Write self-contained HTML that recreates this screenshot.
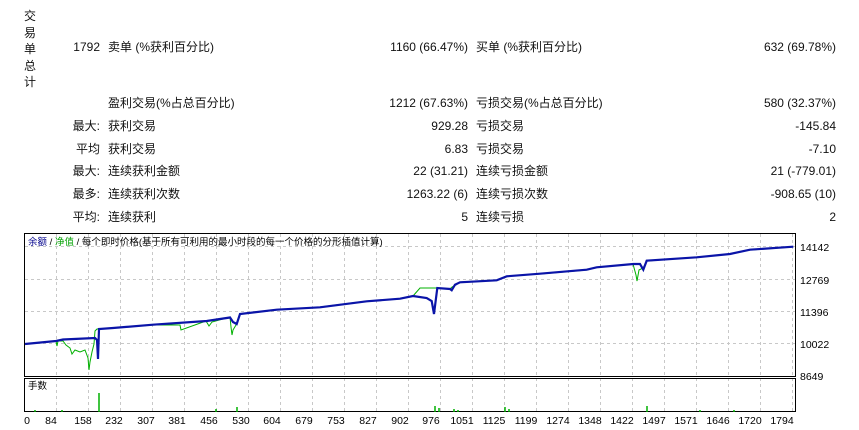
<!DOCTYPE html>
<html><head><meta charset="utf-8"><style>
body{margin:0;width:859px;height:430px;background:#fff;overflow:hidden;position:relative;font-family:"Liberation Sans","Noto Sans CJK SC",sans-serif;font-size:12px;color:#111}
.t{position:absolute;white-space:nowrap;line-height:14px}
.r{text-align:right}
</style></head><body>
<div class="t" style="left:23px;top:8px;width:14px;line-height:16.5px;text-align:center">交<br>易<br>单<br>总<br>计</div>

<div class="t r" style="right:759px;top:40px">1792</div>
<div class="t" style="left:108px;top:40px">卖单 (%获利百分比)</div>
<div class="t r" style="right:391px;top:40px">1160 (66.47%)</div>
<div class="t" style="left:476px;top:40px">买单 (%获利百分比)</div>
<div class="t r" style="right:23px;top:40px">632 (69.78%)</div>

<div class="t" style="left:108px;top:96px">盈利交易(%占总百分比)</div>
<div class="t r" style="right:391px;top:96px">1212 (67.63%)</div>
<div class="t" style="left:476px;top:96px">亏损交易(%占总百分比)</div>
<div class="t r" style="right:23px;top:96px">580 (32.37%)</div>

<div class="t r" style="right:759px;top:119px">最大:</div>
<div class="t" style="left:108px;top:119px">获利交易</div>
<div class="t r" style="right:391px;top:119px">929.28</div>
<div class="t" style="left:476px;top:119px">亏损交易</div>
<div class="t r" style="right:23px;top:119px">-145.84</div>

<div class="t r" style="right:759px;top:142px">平均</div>
<div class="t" style="left:108px;top:142px">获利交易</div>
<div class="t r" style="right:391px;top:142px">6.83</div>
<div class="t" style="left:476px;top:142px">亏损交易</div>
<div class="t r" style="right:23px;top:142px">-7.10</div>

<div class="t r" style="right:759px;top:164px">最大:</div>
<div class="t" style="left:108px;top:164px">连续获利金额</div>
<div class="t r" style="right:391px;top:164px">22 (31.21)</div>
<div class="t" style="left:476px;top:164px">连续亏损金额</div>
<div class="t r" style="right:23px;top:164px">21 (-779.01)</div>

<div class="t r" style="right:759px;top:187px">最多:</div>
<div class="t" style="left:108px;top:187px">连续获利次数</div>
<div class="t r" style="right:391px;top:187px">1263.22 (6)</div>
<div class="t" style="left:476px;top:187px">连续亏损次数</div>
<div class="t r" style="right:23px;top:187px">-908.65 (10)</div>

<div class="t r" style="right:759px;top:210px">平均:</div>
<div class="t" style="left:108px;top:210px">连续获利</div>
<div class="t r" style="right:391px;top:210px">5</div>
<div class="t" style="left:476px;top:210px">连续亏损</div>
<div class="t r" style="right:23px;top:210px">2</div>

<svg width="859" height="430" style="position:absolute;left:0;top:0" font-family="Liberation Sans, Noto Sans CJK SC, sans-serif">
<g stroke="#c8c8c8" stroke-dasharray="3,3" stroke-width="1">
<path d="M56.5 234V412M88.5 234V412M120.5 234V412M152.5 234V412M184.5 234V412M216.5 234V412M248.5 234V412M280.5 234V412M312.5 234V412M344.5 234V412M376.5 234V412M408.5 234V412M440.5 234V412M472.5 234V412M504.5 234V412M536.5 234V412M568.5 234V412M600.5 234V412M632.5 234V412M664.5 234V412M696.5 234V412M728.5 234V412M760.5 234V412M792.5 234V412"/>
<path d="M25 246.5H795M25 279.5H795M25 311.5H795M25 343.5H795"/>
</g>
<rect x="24.5" y="233.5" width="771" height="143" fill="none" stroke="#000"/>
<rect x="24.5" y="378.5" width="771" height="33" fill="none" stroke="#000"/>
<text x="28" y="245" font-size="9.5"><tspan fill="#00008b">余额</tspan><tspan fill="#000"> / </tspan><tspan fill="#00a000">净值</tspan><tspan fill="#000"> / 每个即时价格(基于所有可利用的最小时段的每一个价格的分形插值计算)</tspan></text>
<text x="28" y="389" font-size="9.5" fill="#000">手数</text>
<polyline fill="none" stroke="#00b000" stroke-width="1" points="25,344 56,341 57,346 58,341 63,341 66,345 70,348 72,354 75,350 80,352 85,350 88,358 89,370 90,362 92,352 94,344 95,331 97,329 99,329 113,328 153,325 180,325 181,330 206,321 209,326 212,322 230,317 231,327 232,335 233,330 236,325 240,314 277,310 320,307 367,301 400,299 413,296 420,288 437,288 450,289 452,287 456,285 460,282 497,280 507,276 540,274 587,270 597,267 633,264 636,275 637,281 639,270 643,268 647,261 697,257 730,254 750,250 793,247"/>
<polyline fill="none" stroke="#0a14a8" stroke-width="2.2" points="25,344 56,341 63,339.5 95,338 97,340 98,359 99,329 113,328 153,324.7 206.7,321 230,317.5 233,322 236.7,324 240,314 276.7,309.7 320,307.3 366.7,301.3 400,298.7 413,296 426.7,298 431.7,301 434,314 437.3,288 450,289 451.7,290.3 455,284.7 460,282.3 496.7,280.3 506.7,276.3 540,273.7 586.7,269.7 596.7,267.3 633.3,264 640,264 643.3,269.7 646.7,260.7 696.7,257.3 730,254 750,249.7 793.3,246.7"/>
<g stroke="#00b000" stroke-width="1.5">
<path d="M99 412V393M35 412V410M62 412V410M216 412V409M237 412V407M435 412V406M439 412V408M454 412V409M458 412V410M505 412V407M509 412V409M647 412V406M700 412V410M734 412V410"/>
</g>
<g font-size="10.5" fill="#000">
<text x="800" y="251">14142</text><text x="800" y="284">12769</text><text x="800" y="316">11396</text><text x="800" y="348">10022</text><text x="800" y="380">8649</text>
</g>
<g font-size="10.5" fill="#000" text-anchor="middle">
<text x="27" y="424">0</text><text x="51" y="424">84</text><text x="83" y="424">158</text><text x="114" y="424">232</text><text x="146" y="424">307</text><text x="177" y="424">381</text><text x="209" y="424">456</text><text x="241" y="424">530</text><text x="272" y="424">604</text><text x="304" y="424">679</text><text x="336" y="424">753</text><text x="368" y="424">827</text><text x="400" y="424">902</text><text x="431" y="424">976</text><text x="462" y="424">1051</text><text x="494" y="424">1125</text><text x="526" y="424">1199</text><text x="558" y="424">1274</text><text x="590" y="424">1348</text><text x="622" y="424">1422</text><text x="654" y="424">1497</text><text x="686" y="424">1571</text><text x="718" y="424">1646</text><text x="750" y="424">1720</text><text x="782" y="424">1794</text>
</g>
</svg>
</body></html>
